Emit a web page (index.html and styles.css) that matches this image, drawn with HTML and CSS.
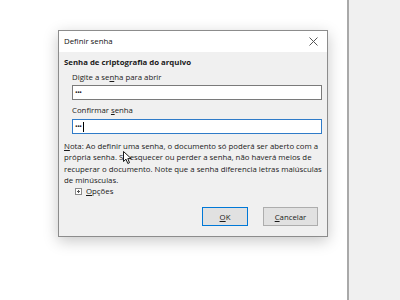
FILE: index.html
```html
<!DOCTYPE html>
<html lang="pt">
<head>
<meta charset="utf-8">
<link rel="stylesheet" href="styles.css">
</head>
<body>
<div class="page">
  <div class="doc">
    <div class="dialog">
      <div class="titlebar">
        <span class="title">Definir senha</span>
        <svg class="close" width="9" height="9" viewBox="0 0 9 9"><path d="M0.5 0.5L8.5 8.5M8.5 0.5L0.5 8.5" stroke="#555" stroke-width="1"/></svg>
      </div>
      <div class="body">
        <div class="heading">Senha de criptografia do arquivo</div>
        <div class="field">
          <div class="label first">Digite a se<u>n</u>ha para abrir</div>
          <div class="input">•••</div>
        </div>
        <div class="field">
          <div class="label second">Confirmar <u>s</u>enha</div>
          <div class="input focus">•••<span class="caret"></span></div>
        </div>
        <div class="note"><u>N</u>ota: Ao definir uma senha, o documento só poderá ser aberto com a<br>própria senha. Se esquecer ou perder a senha, não haverá meios de<br>recuperar o documento. Note que a senha diferencia letras maiúsculas<br>de minúsculas.</div>
        <div class="options"><span class="expander"></span><span><u>O</u>pções</span></div>
        <div class="buttons">
          <div class="btn default"><u>O</u>K</div>
          <div class="btn"><u>C</u>ancelar</div>
        </div>
      </div>
      <svg class="cursor" width="9" height="14" viewBox="0 0 9 14"><path d="M0.5 0.5V10.5L3 8.2L4.8 12.5L6.5 11.7L4.8 7.6H8.2Z" fill="#fff" stroke="#000" stroke-width="0.9"/></svg>
    </div>
  </div>
  <div class="side"></div>
</div>
</body>
</html>
```
FILE: styles.css
```css
html, body {
  margin: 0;
  padding: 0;
  background: #fff;
}
.page {
  display: flex;
  width: 400px;
  height: 300px;
  font-family: "Open Sans", "Noto Sans", sans-serif;
  font-size: 7.8px;
  color: #1a1a1a;
}
.doc {
  width: 347px;
  padding: 30px 0 0 58px;
  box-sizing: border-box;
}
.side {
  flex: 1;
  background: #f0f0f0;
  border-left: 2px solid #a9a9a9;
}
.dialog {
  position: relative;
  width: 270px;
  height: 207px;
  box-sizing: border-box;
  border: 1px solid #8c8c8c;
  background: #f0f0f0;
  box-shadow: 0 4px 14px rgba(0,0,0,0.22);
  display: flex;
  flex-direction: column;
}
.titlebar {
  height: 21px;
  background: #fff;
  display: flex;
  align-items: center;
  justify-content: space-between;
  padding: 0 9px 0 5px;
}
.title {
  color: #111;
  margin-top: -1px;
}
.close {
  display: block;
}
.body {
  flex: 1;
  padding: 4px 5px 0 5px;
  display: flex;
  flex-direction: column;
}
.heading {
  font-weight: bold;
  line-height: 12px;
}
.field {
  padding-left: 8px;
}
.label {
  line-height: 12px;
}
.label.first {
  margin-top: 3px;
}
.label.second {
  margin-top: 4px;
}
.input {
  height: 15px;
  box-sizing: border-box;
  border: 1px solid #7a7a7a;
  background: #fff;
  margin-top: 2px;
  font-size: 7px;
  padding-left: 2px;
  display: flex;
  align-items: center;
  letter-spacing: -0.5px;
}
.field + .field .input {
  margin-top: 3px;
}
.input.focus {
  border-color: #2f7bc8;
}
.caret {
  display: inline-block;
  width: 1px;
  height: 10px;
  background: #000;
  margin-left: 1.5px;
}
.note {
  margin-top: 7px;
  line-height: 11.3px;
  white-space: nowrap;
}
.options {
  display: flex;
  align-items: center;
  gap: 4px;
  margin-top: 0;
  padding-left: 11px;
  line-height: 10px;
}
.expander {
  width: 5px;
  height: 5px;
  border: 1px solid #8a8a8a;
  position: relative;
  background: #fff;
}
.expander::before {
  content: "";
  position: absolute;
  left: 1px; top: 2px;
  width: 3px; height: 1px;
  background: #555;
}
.expander::after {
  content: "";
  position: absolute;
  left: 2px; top: 1px;
  width: 1px; height: 3px;
  background: #555;
}
.buttons {
  display: flex;
  justify-content: flex-end;
  gap: 15px;
  margin-top: 11px;
  padding-right: 4px;
}
.btn {
  height: 19px;
  box-sizing: border-box;
  border: 1px solid #adadad;
  background: #e1e1e1;
  display: flex;
  align-items: center;
  justify-content: center;
  width: 55px;
}
.btn.default {
  width: 46px;
  border-color: #0078d7;
}
.cursor {
  position: absolute;
  left: 64px;
  top: 120px;
}
```
